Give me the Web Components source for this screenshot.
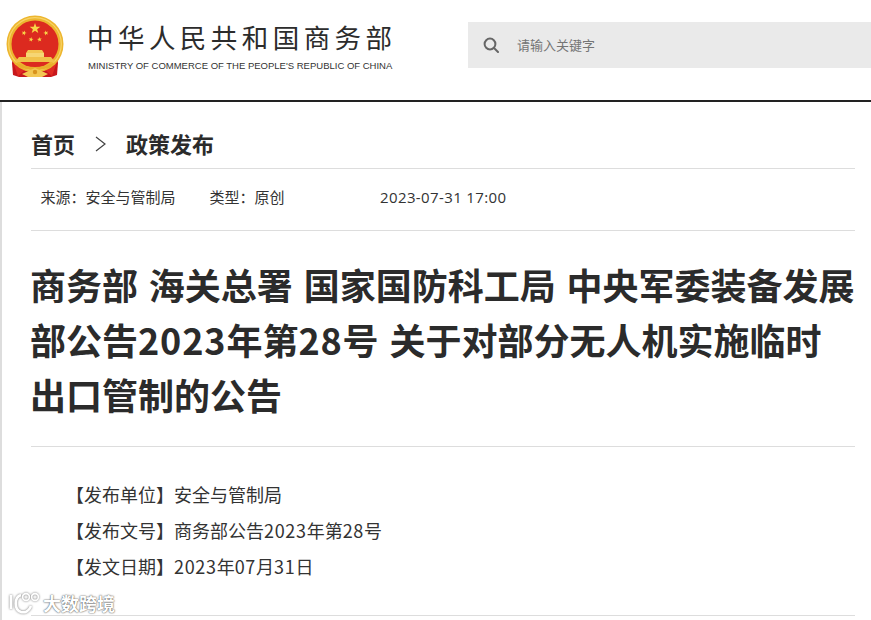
<!DOCTYPE html>
<html lang="zh">
<head>
<meta charset="utf-8">
<title>商务部</title>
<style>
  html, body { margin: 0; padding: 0; background: #fff; overflow: hidden; }
  body { font-family: "Noto Sans CJK SC", "Liberation Sans", sans-serif; color: #333; height: 620px; position: relative; }
  .d { letter-spacing: 0.68px; }
  .t { letter-spacing: 0.85px; }
</style>
</head>
<body>
<mofcom-header></mofcom-header>
<mofcom-article>
  <mofcom-crumbs slot="crumbs"></mofcom-crumbs>
  <mofcom-meta slot="meta"></mofcom-meta>
  <span slot="title"><span>商务部 海关总署 国家国防科工局 中央军委装备发展</span><span>部公告</span><span class="t">2023</span><span>年第</span><span class="t">28</span><span>号 关于对部分无人机实施临时</span><span>出口管制的公告</span></span>
  <mofcom-info label="发布单位">安全与管制局</mofcom-info>
  <mofcom-info label="发布文号">商务部公告<span class="d">2023</span>年第<span class="d">28</span>号</mofcom-info>
  <mofcom-info label="发文日期"><span class="d">2023</span>年<span class="d">07</span>月<span class="d">31</span>日</mofcom-info>
</mofcom-article>
<mofcom-watermark></mofcom-watermark>

<script>
const CJK = `"Noto Sans CJK SC", sans-serif`;

class MofcomEmblem extends HTMLElement {
  constructor() {
    super();
    this.attachShadow({mode: "open"});
    const star = (cx, cy, r, rot) => {
      let pts = [];
      for (let i = 0; i < 10; i++) {
        const rad = i % 2 ? r * 0.4 : r;
        const a = -Math.PI / 2 + rot + i * Math.PI / 5;
        pts.push((cx + rad * Math.cos(a)).toFixed(2) + "," + (cy + rad * Math.sin(a)).toFixed(2));
      }
      return `<polygon points="${pts.join(" ")}" fill="#f8d648"/>`;
    };
    this.shadowRoot.innerHTML = `
      <style>
        :host { display: block; width: 58px; height: 63px; flex: none; }
        svg { display: block; filter: blur(0.35px); }
      </style>
      <svg width="58" height="63" viewBox="0 0 58 63">
        <path d="M7 42 L6 48 L7 60 L13 62 L45 62 L51 60 L52 48 L51 42 Z" fill="#c8171c"/>
        <path d="M7 47 L12 61 L19 55 Z M51 47 L46 61 L39 55 Z" fill="#e02a22"/>
        <circle cx="29" cy="29" r="28.5" fill="#edb62f"/>
        <circle cx="29" cy="29" r="26.3" fill="none" stroke="#f7d468" stroke-width="1.2"/>
        <circle cx="29" cy="29" r="23.5" fill="#dc2a1f"/>
        ${star(29, 13.5, 5.6, 0)}
        ${star(18, 18, 2.7, 0.3)}
        ${star(40, 18, 2.7, -0.3)}
        ${star(25, 24.5, 2.5, 0.15)}
        ${star(33.5, 24.5, 2.5, -0.15)}
        <path d="M22 35 L36 35 L38 38 L20 38 Z" fill="#f3c753"/>
        <rect x="20" y="38" width="18" height="4" fill="#f6d674"/>
        <path d="M13 42 L45 42 L49 47 L9 47 Z" fill="#f1c14a"/>
        <path d="M9 47 C15 50 22 52 29 52 C36 52 43 50 49 47 L45 52 C40 54 35 55 29 55 C23 55 18 54 13 52 Z" fill="#e8ad2b"/>
        <path d="M16 59 L29 53 L42 59 L36 62 L22 62 Z" fill="#f3c753"/>
        <circle cx="29" cy="57" r="2.2" fill="#d8931d"/>
      </svg>
    `;
  }
}
customElements.define("mofcom-emblem", MofcomEmblem);

class MofcomHeader extends HTMLElement {
  constructor() {
    super();
    this.attachShadow({mode: "open"});
    this.shadowRoot.innerHTML = `
      <style>
        :host { display: block; height: 100px; border-bottom: 2px solid #222; }
        .bar { display: flex; align-items: flex-start; height: 100px; }
        mofcom-emblem { margin: 15px 0 0 6px; }
        .name { margin: 19px 0 0 24px; width: 306px; }
        .cn { font: 400 26.5px/36px ${CJK}; color: #2c2c2c; letter-spacing: 4.45px; white-space: nowrap; margin-left: -1px; }
        .en { font: 400 9.5px/14px "Liberation Sans", sans-serif; color: #333; margin-top: 4px; white-space: nowrap; }
        .search { margin: 22px 0 0 74px; flex: 1; height: 46px; background: #eaeaea; display: flex; align-items: center; }
        .search svg { margin-left: 15px; flex: none; }
        .ph { margin-left: 18px; font: 400 13px/20px ${CJK}; color: #757575; }
      </style>
      <div class="bar">
        <mofcom-emblem></mofcom-emblem>
        <div class="name">
          <div class="cn">中华人民共和国商务部</div>
          <div class="en">MINISTRY OF COMMERCE OF THE PEOPLE'S REPUBLIC OF CHINA</div>
        </div>
        <div class="search">
          <svg width="16" height="16" viewBox="0 0 16 16" fill="none" stroke="#666" stroke-width="2">
            <circle cx="7" cy="7" r="5.4"/><path d="M11 11 L15 15" stroke-linecap="round"/>
          </svg>
          <span class="ph">请输入关键字</span>
        </div>
      </div>
    `;
  }
}
customElements.define("mofcom-header", MofcomHeader);

class MofcomCrumbs extends HTMLElement {
  constructor() {
    super();
    this.attachShadow({mode: "open"});
    this.shadowRoot.innerHTML = `
      <style>
        :host { display: flex; align-items: center; height: 67px; border-bottom: 1px solid #ddd; box-sizing: border-box; padding-top: 15px; }
        span { font: 700 22px/30px ${CJK}; color: #2b2b2b; }
        svg { margin: 2px 20px 0 20px; flex: none; }
      </style>
      <span>首页</span>
      <svg width="11" height="16" viewBox="0 0 11 16" fill="none" stroke="#444" stroke-width="1.2"><path d="M1 1 L10 8 L1 15"/></svg>
      <span>政策发布</span>
    `;
  }
}
customElements.define("mofcom-crumbs", MofcomCrumbs);

class MofcomMeta extends HTMLElement {
  constructor() {
    super();
    this.attachShadow({mode: "open"});
    this.shadowRoot.innerHTML = `
      <style>
        :host { display: flex; align-items: center; height: 62px; border-bottom: 1px solid #ddd; box-sizing: border-box; padding: 0 0 5px 9.5px; font: 400 15px/22px ${CJK}; color: #333; }
        .type { margin-left: 34px; }
        .time { margin-left: 95.5px; font-family: "Open Sans", "Liberation Sans", sans-serif; font-size: 15px; letter-spacing: 0.38px; }
      </style>
      <span>来源：安全与管制局</span>
      <span class="type">类型：原创</span>
      <span class="time">2023-07-31 17:00</span>
    `;
  }
}
customElements.define("mofcom-meta", MofcomMeta);

class MofcomInfo extends HTMLElement {
  constructor() {
    super();
    this.attachShadow({mode: "open"});
    this.shadowRoot.innerHTML = `
      <style>
        :host { display: block; font: 400 18px/36px ${CJK}; color: #333; padding-left: 35px; white-space: nowrap; }
      </style>
      <span>【${this.getAttribute("label")}】</span><slot></slot>
    `;
  }
}
customElements.define("mofcom-info", MofcomInfo);

class MofcomArticle extends HTMLElement {
  constructor() {
    super();
    this.attachShadow({mode: "open"});
    this.shadowRoot.innerHTML = `
      <style>
        :host { display: block; border-left: 2px solid #ddd; padding: 0 16px 0 29px; height: 518px; box-sizing: border-box; overflow: hidden; }
        h1 { margin: 0; padding: 26px 0 24px; font: 700 36px/55px ${CJK}; color: #2b2b2b; border-bottom: 1px solid #ddd; word-spacing: 2.7px; }
        ::slotted([slot=title]) { display: block; margin-left: -1px; }
        .info { padding-top: 29px; height: 169px; box-sizing: border-box; border-bottom: 1px solid #ddd; }
      </style>
      <slot name="crumbs"></slot>
      <slot name="meta"></slot>
      <h1><slot name="title"></slot></h1>
      <div class="info"><slot></slot></div>
    `;
  }
}
customElements.define("mofcom-article", MofcomArticle);

class MofcomWatermark extends HTMLElement {
  constructor() {
    super();
    this.attachShadow({mode: "open"});
    this.shadowRoot.innerHTML = `
      <style>
        :host { position: absolute; left: 8px; top: 591px; display: flex; align-items: center; gap: 1px; }
        svg { display: block; filter: drop-shadow(0 0 1px rgba(0,0,0,.55)); }
        span { font: 700 18px/24px ${CJK}; color: #fff; text-shadow: 0 0 2px rgba(0,0,0,.6), 0 0 1px rgba(0,0,0,.5); }
      </style>
      <svg width="34" height="24" viewBox="0 0 34 24" fill="none" stroke="#fff" stroke-width="2.6">
        <path d="M3 4 L3 18"/>
        <path d="M13 4 C6 6 6 19 13 21 C17 22 21 20 23 15"/>
        <circle cx="18" cy="6" r="3.4" stroke-width="1.6"/>
        <circle cx="27" cy="6" r="3.4" stroke-width="1.6"/>
      </svg>
      <span>大数跨境</span>
    `;
  }
}
customElements.define("mofcom-watermark", MofcomWatermark);
</script>
</body>
</html>
